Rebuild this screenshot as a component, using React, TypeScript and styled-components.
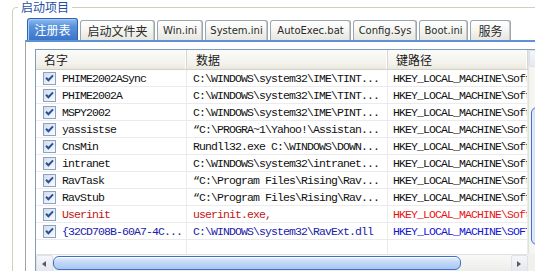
import styled, { createGlobalStyle } from "styled-components";

const GlobalStyle = createGlobalStyle`
  html, body {
    margin: 0;
    padding: 0;
    background: #ffffff;
    overflow: hidden;
  }
  body {
    font-family: "Noto Sans CJK SC", "DejaVu Sans", sans-serif;
  }
`;

const Screen = styled.div`
  width: 535px;
  height: 271px;
  overflow: hidden;
  background: #ffffff;
`;

const GroupBox = styled.fieldset`
  margin: 0 0 0 12px;
  padding: 4px 0 0 5px;
  width: 600px;
  height: 400px;
  min-width: 0;
  border: 1px solid #d0d0bf;
  border-radius: 4px;
  box-sizing: border-box;
`;

const Legend = styled.legend`
  padding: 0 3px;
  margin: 0;
  font-size: 12px;
  line-height: 14px;
  color: #1f4fa4;
  font-family: "Noto Sans CJK SC", sans-serif;
`;

const TabControl = styled.div`
  margin-left: 7px;
  display: flex;
  flex-direction: column;
`;

const TabStrip = styled.div`
  display: flex;
  align-items: flex-end;
  gap: 2px;
  height: 22px;
  padding-left: 2px;
`;

const Tab = styled.div<{ $w: number; $active?: boolean; $cjk?: boolean }>`
  width: ${({ $w }) => $w}px;
  height: ${({ $active }) => ($active ? 22 : 20)}px;
  box-sizing: border-box;
  display: flex;
  align-items: center;
  justify-content: center;
  border: 1px solid ${({ $active }) => ($active ? "#2f62ae" : "#9aa6b2")};
  border-bottom: none;
  border-radius: 3px 3px 0 0;
  font-family: ${({ $cjk }) =>
    $cjk ? `"Noto Sans CJK SC", sans-serif` : `"DejaVu Sans", sans-serif`};
  font-size: ${({ $cjk }) => ($cjk ? 12 : 10)}px;
  color: ${({ $active }) => ($active ? "#ffffff" : "#2a2a2a")};
  background: ${({ $active }) =>
    $active
      ? "linear-gradient(#8dbaf0 0%, #5a93dc 35%, #3a74c8 100%)"
      : "linear-gradient(#ffffff 0%, #f5f5f1 50%, #e6e5de 100%)"};
  box-shadow: ${({ $active }) =>
    $active ? "inset 1px 1px 0 #a9cbf5" : "inset -1px 0 0 #c9c8c0"};
  white-space: nowrap;
`;

const Panel = styled.div`
  border-top: 2px solid #5f92d4;
  border-left: 1px solid #a0a4a8;
  padding: 7px 0 0 9px;
  background: #ffffff;
  height: 260px;
`;

const ListView = styled.div`
  width: 509px;
  border: 1px solid #7f9db9;
  display: grid;
  grid-template-columns: 492px 17px;
  grid-template-rows: 204px 17px;
  background: #ffffff;
`;

const Table = styled.div`
  display: flex;
  flex-direction: column;
  overflow: hidden;
`;

const HeaderRow = styled.div`
  display: grid;
  grid-template-columns: 151px 201px 140px;
  height: 20px;
  box-sizing: border-box;
  background: linear-gradient(#fbfbf9 0%, #f3f2ec 70%, #e9e8e0 100%);
  border-bottom: 1px solid #d6d2c2;
`;

const HeaderCell = styled.div<{ $pad: number }>`
  display: flex;
  align-items: center;
  padding-left: ${({ $pad }) => $pad}px;
  font-size: 12px;
  color: #1a1a1a;
  border-right: 1px solid #d9d6ca;
  box-shadow: inset -1px 0 0 #ffffff;
  font-family: "Noto Sans CJK SC", sans-serif;
`;

const Row = styled.div<{ $fill?: boolean }>`
  display: grid;
  grid-template-columns: 151px 201px 140px;
  height: ${({ $fill }) => ($fill ? "auto" : "17px")};
  flex: ${({ $fill }) => ($fill ? 1 : "none")};
  box-sizing: border-box;
  border-bottom: ${({ $fill }) => ($fill ? "none" : "1px solid #ebebeb")};
`;

const Cell = styled.div<{ $pad: number; $color: string }>`
  display: flex;
  align-items: center;
  gap: 6px;
  padding-left: ${({ $pad }) => $pad}px;
  border-right: 1px solid #ebebeb;
  overflow: hidden;
  white-space: nowrap;
  font-family: "Liberation Mono", monospace;
  font-size: 11.5px;
  letter-spacing: -0.9px;
  color: ${({ $color }) => $color};
`;

const CheckBox = styled.span`
  flex: none;
  width: 13px;
  height: 13px;
  box-sizing: border-box;
  border: 1px solid #8aa2c4;
  background: linear-gradient(135deg, #d3dce8 0%, #eef2f7 70%, #fafbfc 100%);
  display: flex;
  align-items: center;
  justify-content: center;
`;

const VScroll = styled.div`
  display: flex;
  flex-direction: column;
  background: linear-gradient(to right, #f3f3ef, #fdfdfb);
  border-left: 1px solid #e2e2dc;
`;

const HScroll = styled.div`
  display: flex;
  align-items: stretch;
  background: linear-gradient(#f9f9f7, #ededea);
  border-top: 1px solid #e3e3de;
`;

const ArrowButton = styled.div`
  flex: none;
  width: 17px;
  height: 17px;
  box-sizing: border-box;
  display: flex;
  align-items: center;
  justify-content: center;
  background: linear-gradient(#f4f6fa, #e4e8ef);
  border: 1px solid #dde2ea;
  border-radius: 2px;
`;

const HThumb = styled.div<{ $w: number }>`
  flex: none;
  width: ${({ $w }) => $w}px;
  box-sizing: border-box;
  margin: 1px 0;
  border: 1px solid #3f6ec4;
  border-radius: 6px;
  background: linear-gradient(#e6f0fd 0%, #c4d9f7 40%, #a9c6f0 100%);
  box-shadow: inset 0 1px 0 #ffffff;
`;

const Track = styled.div`
  flex: 1;
`;

const VThumb = styled.div<{ $top: number; $h: number }>`
  margin: ${({ $top }) => $top}px 1px 0 2px;
  height: ${({ $h }) => $h}px;
  box-sizing: border-box;
  border: 1px solid #3f6ec4;
  border-radius: 6px;
  background: linear-gradient(to right, #e6f0fd 0%, #c4d9f7 40%, #a9c6f0 100%);
`;

const Corner = styled.div`
  background: #f0f0ec;
`;

type Item = { name: string; data: string; key: string; tone?: "red" | "blue" };

const tabs = [
  { label: "注册表", w: 51, cjk: true, active: true },
  { label: "启动文件夹", w: 75, cjk: true },
  { label: "Win.ini", w: 46 },
  { label: "System.ini", w: 63 },
  { label: "AutoExec.bat", w: 81 },
  { label: "Config.Sys", w: 64 },
  { label: "Boot.ini", w: 49 },
  { label: "服务", w: 41, cjk: true },
];

const KEY = "HKEY_LOCAL_MACHINE\\Software\\Microsoft\\Windows\\CurrentVersion\\Run";

const items: Item[] = [
  { name: "PHIME2002ASync", data: "C:\\WINDOWS\\system32\\IME\\TINT...", key: KEY },
  { name: "PHIME2002A", data: "C:\\WINDOWS\\system32\\IME\\TINT...", key: KEY },
  { name: "MSPY2002", data: "C:\\WINDOWS\\system32\\IME\\PINT...", key: KEY },
  { name: "yassistse", data: "\u201cC:\\PROGRA~1\\Yahoo!\\Assistan...", key: KEY },
  { name: "CnsMin", data: "Rundll32.exe C:\\WINDOWS\\DOWN...", key: KEY },
  { name: "intranet", data: "C:\\WINDOWS\\system32\\intranet...", key: KEY },
  { name: "RavTask", data: "\u201cC:\\Program Files\\Rising\\Rav...", key: KEY },
  { name: "RavStub", data: "\u201cC:\\Program Files\\Rising\\Rav...", key: KEY },
  {
    name: "Userinit",
    data: "userinit.exe,",
    key: "HKEY_LOCAL_MACHINE\\Software\\Microsoft\\Windows NT\\CurrentVersion\\Winlogon",
    tone: "red",
  },
  {
    name: "{32CD708B-60A7-4C...",
    data: "C:\\WINDOWS\\system32\\RavExt.dll",
    key: "HKEY_LOCAL_MACHINE\\SOFTWARE\\Microsoft\\Windows\\CurrentVersion\\ShellServiceObjectDelayLoad",
    tone: "blue",
  },
];

const tones = {
  red: { text: "#c01818", key: "#e81414" },
  blue: { text: "#1a22a8", key: "#1414d4" },
  none: { text: "#111111", key: "#111111" },
};

function Check() {
  return (
    <svg width="9" height="8" viewBox="0 0 9 8">
      <path d="M1 3.8 L3.4 6.2 L8 1.4" fill="none" stroke="#2a4f9a" strokeWidth="2" />
    </svg>
  );
}

function Arrow({ dir }: { dir: "left" | "right" | "up" }) {
  const d =
    dir === "left" ? "M5 1 L1 4 L5 7 Z" : dir === "right" ? "M1 1 L5 4 L1 7 Z" : "M1 5 L4 1 L7 5 Z";
  return (
    <svg width="8" height="8" viewBox="0 0 8 8">
      <path d={d} fill="#555a60" />
    </svg>
  );
}

export default function App() {
  return (
    <Screen>
      <GlobalStyle />
      <GroupBox>
        <Legend>启动项目</Legend>
        <TabControl>
          <TabStrip>
            {tabs.map((t) => (
              <Tab key={t.label} $w={t.w} $active={t.active} $cjk={t.cjk}>
                {t.label}
              </Tab>
            ))}
          </TabStrip>
          <Panel>
            <ListView>
              <Table>
                <HeaderRow>
                  <HeaderCell $pad={8}>名字</HeaderCell>
                  <HeaderCell $pad={9}>数据</HeaderCell>
                  <HeaderCell $pad={8}>键路径</HeaderCell>
                </HeaderRow>
                {items.map((it) => {
                  const c = tones[it.tone ?? "none"];
                  return (
                    <Row key={it.name}>
                      <Cell $pad={7} $color={c.text}>
                        <CheckBox>
                          <Check />
                        </CheckBox>
                        {it.name}
                      </Cell>
                      <Cell $pad={6} $color={c.text}>{it.data}</Cell>
                      <Cell $pad={5} $color={c.key}>{it.key}</Cell>
                    </Row>
                  );
                })}
                <Row $fill>
                  <Cell $pad={0} $color="#000" />
                  <Cell $pad={0} $color="#000" />
                  <Cell $pad={0} $color="#000" />
                </Row>
              </Table>
              <VScroll>
                <ArrowButton>
                  <Arrow dir="up" />
                </ArrowButton>
                <VThumb $top={40} $h={138} />
              </VScroll>
              <HScroll>
                <ArrowButton>
                  <Arrow dir="left" />
                </ArrowButton>
                <HThumb $w={408} />
                <Track />
                <ArrowButton>
                  <Arrow dir="right" />
                </ArrowButton>
              </HScroll>
              <Corner />
            </ListView>
          </Panel>
        </TabControl>
      </GroupBox>
    </Screen>
  );
}
